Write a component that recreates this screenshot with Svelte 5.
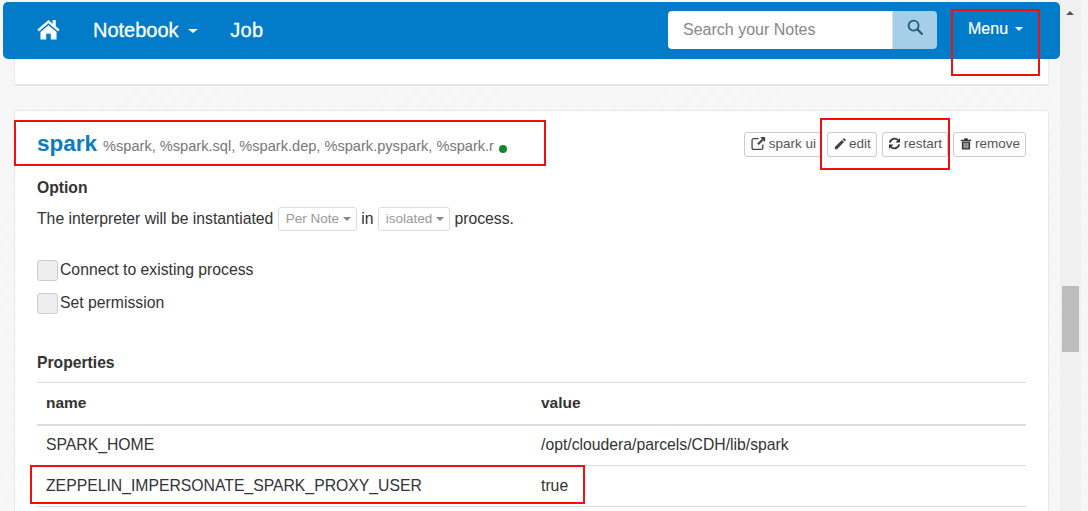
<script>
  const rows = [
    { name: 'SPARK_HOME', value: '/opt/cloudera/parcels/CDH/lib/spark' },
    { name: 'ZEPPELIN_IMPERSONATE_SPARK_PROXY_USER', value: 'true' }
  ];
</script>

<div class="page">
  <div class="main">
    <nav class="navbar">
      <svg class="home" viewBox="0 0 24 22" aria-hidden="true">
        <path d="M12 1.6 0.4 11.6l1.6 2L12 5l10 8.6 1.6-2-4-3.4V1.6h-3.2v3.8z" fill="#fff" />
        <path d="M12 7 3.6 14.2V22h6v-6h4.8v6h6v-7.8z" fill="#fff" />
      </svg>
      <a class="nav-link notebook">Notebook <span class="caret big"></span></a>
      <a class="nav-link job">Job</a>
      <div class="spacer"></div>
      <div class="search">
        <input class="search-input" placeholder="Search your Notes" />
        <button class="search-btn" aria-label="Search">
          <svg viewBox="0 0 16 16" width="16" height="16"><circle cx="6.6" cy="6.6" r="5" fill="none" stroke="#245d7f" stroke-width="1.9" /><path d="M10.4 10.4 15 15" stroke="#245d7f" stroke-width="2.2" stroke-linecap="round" /></svg>
        </button>
      </div>
      <a class="menu">Menu <span class="caret"></span></a>
    </nav>

    <div class="stub"></div>

    <section class="card">
      <header class="head">
        <div class="title">
          <span class="name">spark</span>
          <span class="bindings">%spark, %spark.sql, %spark.dep, %spark.pyspark, %spark.r</span>
          <span class="dot"></span>
        </div>
        <div class="actions">
          <button class="btn">
            <svg viewBox="0 0 14 14" width="15" height="15"><path d="M11 8v3.2a1.3 1.3 0 0 1-1.3 1.3H2.3A1.3 1.3 0 0 1 1 11.2V3.8a1.3 1.3 0 0 1 1.3-1.3H7" fill="none" stroke="#444" stroke-width="1.2" /><path d="M8.6 1h4.6v4.6l-1.6-1.5-4.4 4.4-1.4-1.4 4.4-4.4z" fill="#444" /></svg>
            spark ui
          </button>
          <button class="btn">
            <svg viewBox="0 0 14 14" width="12" height="12"><path d="M1 10.5 9.2 2.3l2.5 2.5-8.2 8.2H1zM10 1.5l1-1a1 1 0 0 1 1.3 0l1.2 1.2a1 1 0 0 1 0 1.3l-1 1z" fill="#444" /></svg>
            edit
          </button>
          <button class="btn narrow">
            <svg viewBox="0 0 14 14" width="13" height="13"><path d="M2 6a5.2 5.2 0 0 1 8.8-2.6" fill="none" stroke="#333" stroke-width="2" /><path d="M13 1v5H8z" fill="#333" /><path d="M12 8a5.2 5.2 0 0 1-8.8 2.6" fill="none" stroke="#333" stroke-width="2" /><path d="M1 13V8h5z" fill="#333" /></svg>
            restart
          </button>
          <button class="btn">
            <svg viewBox="0 0 14 14" width="12" height="13"><path d="M1 2.6h12v1.4H1zM5 1h4v1.6H5z" fill="#333" /><path d="M2.2 4.6h9.6V13a1 1 0 0 1-1 1H3.2a1 1 0 0 1-1-1zM4.3 6v6.4h1V6zm2.2 0v6.4h1V6zm2.2 0v6.4h1V6z" fill="#333" fill-rule="evenodd" /></svg>
            remove
          </button>
        </div>
      </header>

      <h3 class="label option">Option</h3>
      <p class="mode">
        The interpreter will be instantiated
        <span class="pick">Per Note <span class="caret small"></span></span>
        in
        <span class="pick">isolated <span class="caret small"></span></span>
        process.
      </p>

      <label class="check first"><span class="box"></span>Connect to existing process</label>
      <label class="check"><span class="box"></span>Set permission</label>

      <h3 class="label props">Properties</h3>
      <table>
        <thead>
          <tr><th class="c1">name</th><th>value</th></tr>
        </thead>
        <tbody>
          {#each rows as row}
            <tr><td class="c1">{row.name}</td><td>{row.value}</td></tr>
          {/each}
        </tbody>
      </table>
    </section>
  </div>

  <aside class="scrollbar">
    <span class="up"></span>
    <span class="thumb"></span>
  </aside>

  <div class="mark m-menu"></div>
  <div class="mark m-title"></div>
  <div class="mark m-actions"></div>
  <div class="mark m-row"></div>
</div>

<style>
  :global(body) {
    margin: 0;
    font-family: "Liberation Sans", Arial, sans-serif;
  }
  .page {
    position: relative;
    width: 1088px;
    height: 511px;
    overflow: hidden;
    display: flex;
    color: #333;
    background: repeating-linear-gradient(135deg, #f8f8f8 0 1px, #f5f5f5 1px 2px);
  }
  .main {
    width: 1060px;
    flex: none;
    padding-top: 2px;
  }
  .navbar {
    margin-left: 3px;
    height: 57px;
    box-sizing: border-box;
    background: #027bc8;
    border-radius: 5px;
    display: flex;
    align-items: center;
    color: #fff;
  }
  .home {
    width: 23px;
    height: 22px;
    margin: -4px 0 0 34px;
  }
  .nav-link {
    font-size: 20px;
    color: #fff;
    -webkit-text-stroke: 0.3px #fff;
  }
  .notebook { margin-left: 33px; margin-top: -1px; }
  .job { margin-left: 32px; margin-top: -1px; letter-spacing: 0.4px; }
  .spacer { flex: 1; }
  .search {
    display: flex;
    width: 269px;
    height: 38px;
    margin-bottom: 1px;
    border-radius: 4px;
    overflow: hidden;
  }
  .search-input {
    flex: 1;
    min-width: 0;
    border: 0;
    padding: 0 15px;
    font: 16px "Liberation Sans", Arial, sans-serif;
    background: #fff;
    border-right: 1px solid #ddd;
  }
  .search-input::placeholder { color: #888; opacity: 1; }
  .search-btn {
    width: 44px;
    border: 0;
    padding: 0 0 6px;
    background: #a5cfe9;
    display: flex;
    align-items: center;
    justify-content: center;
  }
  .menu {
    font-size: 16px;
    margin: -4px 21px 0 31px;
    width: 71px;
    -webkit-text-stroke: 0.2px #fff;
    color: #fff;
    white-space: nowrap;
  }
  .caret {
    display: inline-block;
    width: 0;
    height: 0;
    border-left: 4px solid transparent;
    border-right: 4px solid transparent;
    border-top: 4px solid currentColor;
    margin-left: 3px;
    vertical-align: middle;
  }
  .caret.big { margin-left: 4px; border-left-width: 5px; border-right-width: 5px; }
  .caret.small { margin-left: 0; border-top-color: #888; }
  .stub {
    height: 27px;
    margin: 0 11px 0 14px;
    box-sizing: border-box;
    background: #fff;
    border: 1px solid #ebebeb;
    border-top: 0;
    border-bottom: 2px solid #e6e6e6;
    border-radius: 0 0 3px 3px;
  }
  .card {
    margin: 24px 11px 0 14px;
    height: 420px;
    box-sizing: border-box;
    background: #fff;
    border: 1px solid #e8e8e8;
    border-radius: 3px;
    padding: 0 22px;
  }
  .head {
    display: flex;
    justify-content: space-between;
    height: 67px;
  }
  .title {
    display: flex;
    align-items: baseline;
    padding-top: 20px;
    height: 30px;
  }
  .name {
    font-size: 22.5px;
    font-weight: bold;
    color: #0a7cc4;
  }
  .bindings {
    font-size: 14.6px;
    color: #777;
    margin-left: 6px;
  }
  .dot {
    width: 8px;
    height: 8px;
    border-radius: 50%;
    background: #0f8a2c;
    margin-left: 5px;
    align-self: center;
    position: relative;
    top: 3px;
  }
  .actions {
    display: flex;
    gap: 5px;
    padding-top: 21px;
    align-items: flex-start;
  }
  .btn {
    height: 25px;
    box-sizing: border-box;
    border: 1px solid #ccc;
    border-radius: 3px;
    background: #fff;
    color: #555;
    font: 13.5px "Liberation Sans", Arial, sans-serif;
    padding: 0 5px 2px 6px;
    display: flex;
    align-items: center;
    gap: 3px;
  }
  .btn.narrow { padding-left: 5px; }
  .label {
    margin: 0;
    font-size: 15.7px;
    line-height: 20px;
    font-weight: bold;
    color: #333;
  }
  .mode {
    margin: 9px 0 0;
    font-size: 15.75px;
    line-height: 23px;
    height: 24px;
    white-space: nowrap;
  }
  .pick {
    display: inline-block;
    box-sizing: border-box;
    height: 24px;
    line-height: 21px;
    padding: 0 5px 0 7px;
    margin: 0;
    border: 1px solid #ddd;
    border-radius: 3px;
    font-size: 13.5px;
    color: #999;
    vertical-align: top;
  }
  .check {
    display: flex;
    align-items: center;
    height: 21px;
    font-size: 15.75px;
    line-height: 19px;
    padding-bottom: 0;
    margin-top: 12px;
  }
  .check.first { margin-top: 29px; }
  .box {
    width: 21px;
    height: 21px;
    box-sizing: border-box;
    background: #eee;
    border: 1px solid #ccc;
    border-radius: 3px;
    margin-right: 2px;
    position: relative;
    top: 1px;
  }
  .check { position: relative; top: -1px; }
  .props { margin-top: 39px; }
  table {
    width: 100%;
    border-collapse: collapse;
    margin-top: 9px;
    font-size: 15.75px;
    table-layout: fixed;
  }
  th, td {
    text-align: left;
    padding: 0 9px;
    height: 41px;
    box-sizing: border-box;
    border-top: 1px solid #ddd;
  }
  th { font-weight: bold; font-size: 15.5px; border-bottom: 2px solid #ddd; height: 42px; }
  tbody tr:last-child td { border-bottom: 1px solid #ddd; }
  .c1 { width: 495px; }
  .scrollbar {
    position: relative;
    width: 21px;
    flex: none;
    background: #f0f0f0;
  }
  .up {
    position: absolute;
    left: 6px;
    top: 11px;
    border-left: 4px solid transparent;
    border-right: 4px solid transparent;
    border-bottom: 4px solid #555;
  }
  .thumb {
    position: absolute;
    left: 2px;
    top: 286px;
    width: 17px;
    height: 66px;
    background: #bdbdbd;
  }
  .mark {
    position: absolute;
    box-sizing: border-box;
    border: 2px solid #f01010;
    pointer-events: none;
  }
  .m-menu { left: 951px; top: 9px; width: 89px; height: 67px; }
  .m-title { left: 14px; top: 120px; width: 532px; height: 46px; }
  .m-actions { left: 820px; top: 118px; width: 130px; height: 52px; }
  .m-row { left: 30px; top: 465px; width: 555px; height: 39px; }
</style>
